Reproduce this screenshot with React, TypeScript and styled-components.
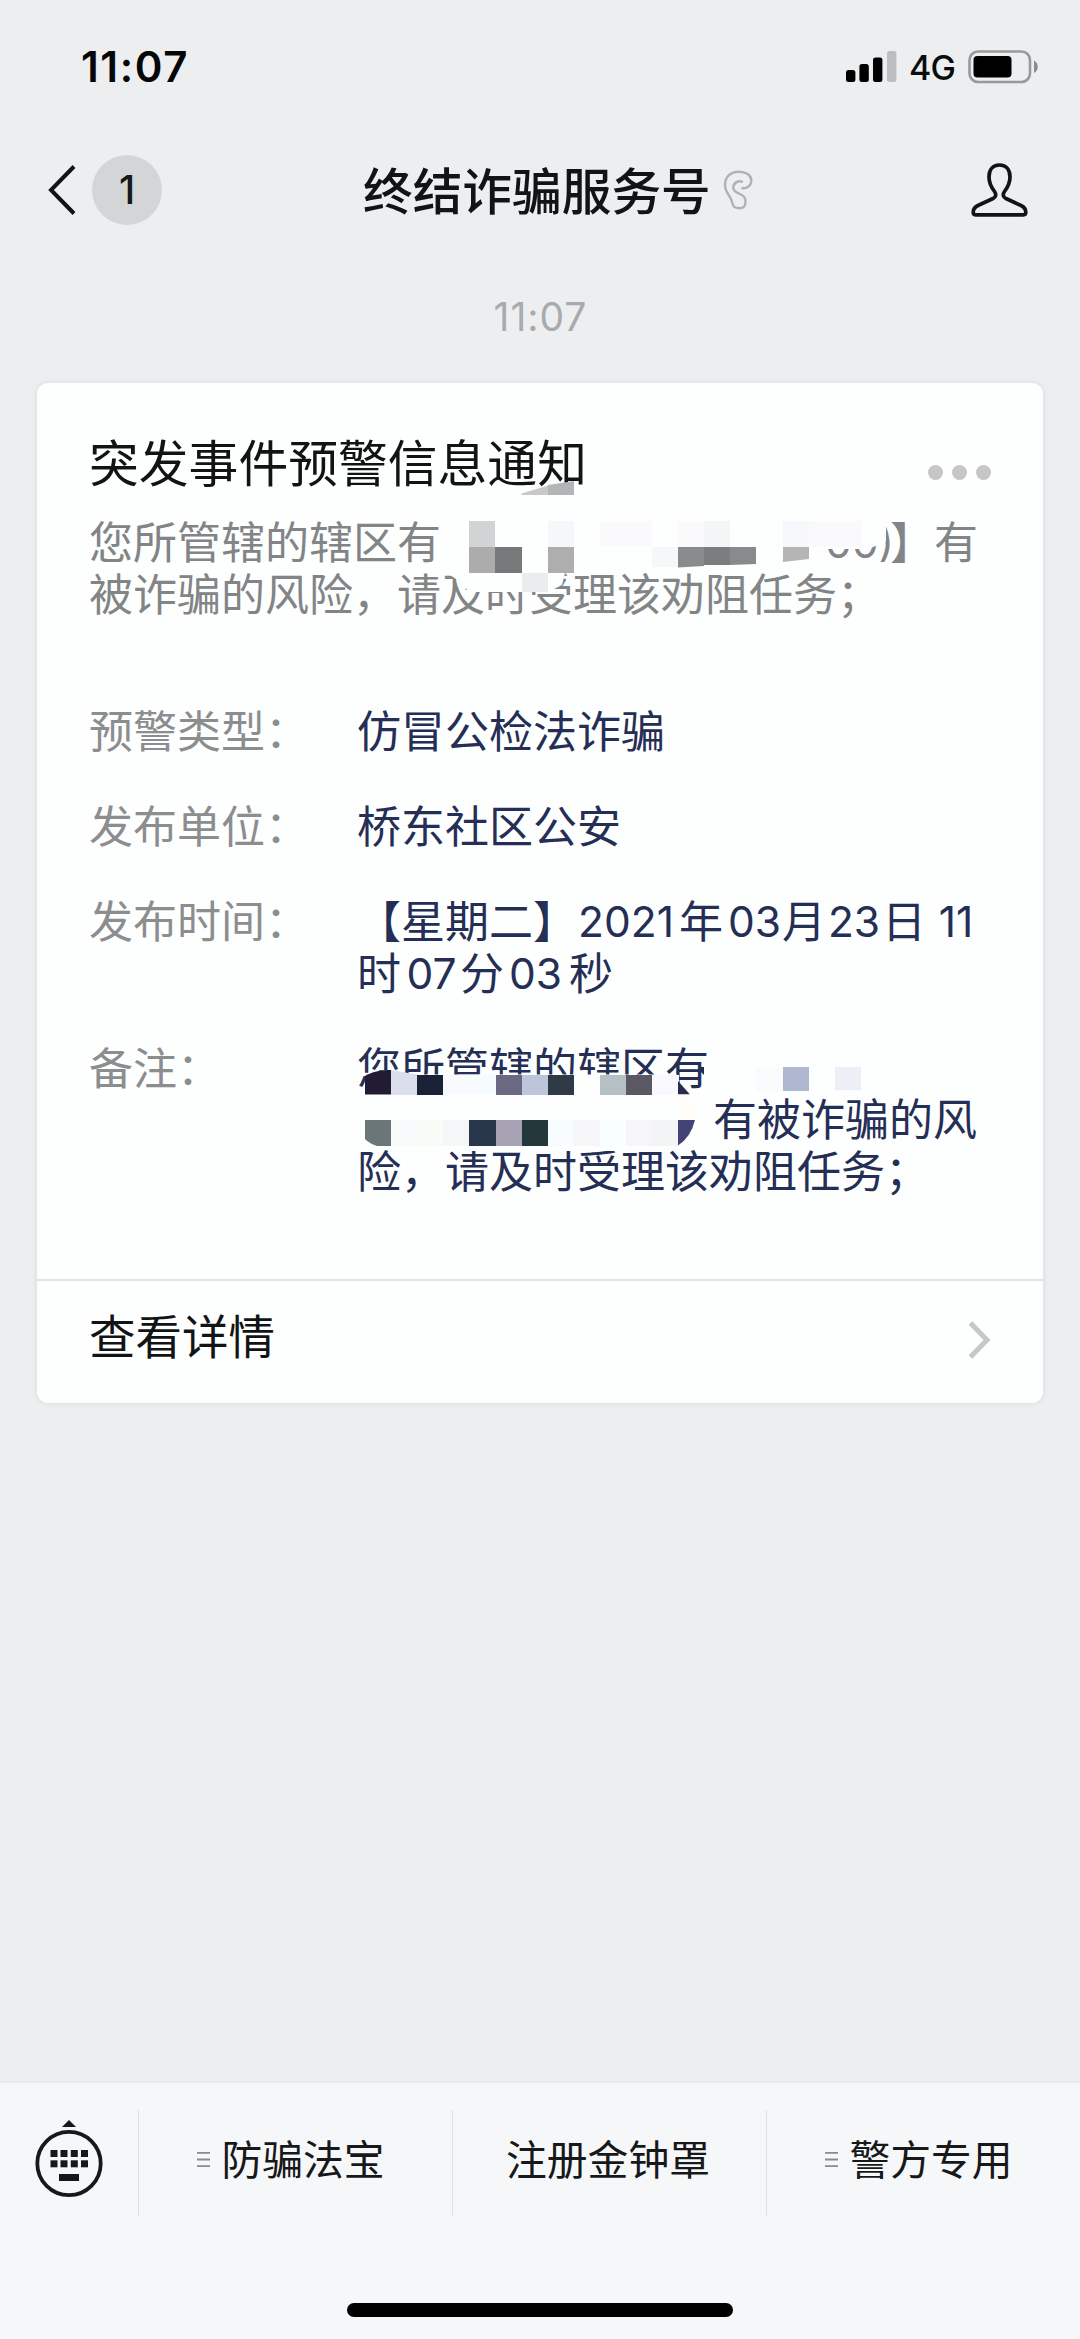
import React from "react";
import styled, { createGlobalStyle } from "styled-components";

const cjk = `"Noto Sans CJK SC", "Noto Sans", sans-serif`;
const latin = `Inter, "Noto Sans CJK SC", sans-serif`;

const Global = createGlobalStyle`
  * { box-sizing: border-box; }
  body { margin: 0; background: #edeef0; font-family: ${cjk}; }
`;

const Screen = styled.div`
  width: 1080px;
  height: 2339px;
  display: flex;
  flex-direction: column;
  background: #edeef0;
  overflow: hidden;
`;

const StatusBar = styled.header`
  height: 132px;
  padding: 1px 41px 0 81px;
  display: flex;
  align-items: center;
  justify-content: space-between;
`;

const Clock = styled.div`
  font: 600 42px/60px ${latin};
  letter-spacing: 1.6px;
  color: #050607;
`;

const StatusIcons = styled.div`
  display: flex;
  align-items: center;
`;

const Network = styled.span`
  width: 48px;
  margin: 3px 11px 0 12px;
  font: 500 34px/50px ${latin};
  letter-spacing: -0.8px;
  color: #0a0b0c;
`;

const NavBar = styled.nav`
  height: 115px;
  padding: 0 52px 0 48px;
  display: flex;
  align-items: center;
`;

const Badge = styled.span`
  width: 70px;
  height: 70px;
  margin-left: 16px;
  border-radius: 50%;
  background: #d4d5d6;
  display: flex;
  align-items: center;
  justify-content: center;
  font: 500 39px/70px ${latin};
  color: #17181a;
`;

const Title = styled.h1`
  margin: -4px 12px 0 201px;
  font: 500 49.7px/72px ${cjk};
  color: #121315;
  white-space: nowrap;
`;

const Push = styled.div`
  flex: 1;
`;

const Chat = styled.main`
  flex: 1;
  padding: 40px 37px 0;
`;

const TimeStamp = styled.div`
  height: 60px;
  margin-bottom: 36px;
  padding-left: 1px;
  text-align: center;
  font: 400 39px/60px ${latin};
  letter-spacing: 1px;
  color: #a9aaac;
`;

const Card = styled.article`
  width: 1006px;
  height: 1020px;
  border-radius: 11px;
  background: #fdfefe;
  box-shadow: 0 0 5px #d6d7da;
  display: flex;
  flex-direction: column;
`;

const CardBody = styled.section`
  flex: 1;
  padding: 39px 51px 0 52px;
`;

const CardHead = styled.div`
  height: 76px;
  display: flex;
  justify-content: space-between;
  align-items: center;
`;

const CardTitle = styled.h2`
  margin: 0;
  font: 400 49.8px/76px ${cjk};
  color: #121315;
`;

const Dots = styled.div`
  display: flex;
  gap: 9px;
  margin: 24px 1px 0 0;
`;

const Dot = styled.i`
  width: 15px;
  height: 15px;
  border-radius: 50%;
  background: #c6c6c8;
`;

const Block = styled.div<{ $tone: string }>`
  position: relative;
  font: 400 44px/51.5px ${cjk};
  color: ${(p) => p.$tone};
  white-space: nowrap;
`;

const Summary = styled(Block)`
  margin: 17px 0 86px;
`;

const Line = styled.div<{ $indent?: number }>`
  display: flex;
  height: 51.5px;
  padding-left: ${(p) => p.$indent ?? 0}px;
`;

const Gap = styled.span<{ $w: number }>`
  width: ${(p) => p.$w}px;
`;

const Num = styled.span<{ $w: number; $nudge?: number }>`
  width: ${(p) => p.$w}px;
  padding: 2px 0 0 ${(p) => Math.max(p.$nudge ?? 0, 0)}px;
  padding-right: ${(p) => Math.max(-(p.$nudge ?? 0), 0)}px;
  text-align: center;
  font-family: ${latin};
  font-size: 42.5px;
`;

const Overlay = styled.svg`
  position: absolute;
  left: 0;
  top: 0;
  overflow: visible;
  pointer-events: none;
`;

const Fields = styled.dl`
  margin: 0;
  display: grid;
  grid-template-columns: 268px 1fr;
  row-gap: 43.5px;
`;

const Label = styled.dt`
  font: 400 44px/51.5px ${cjk};
  color: #8c8d8f;
`;

const Value = styled.dd`
  margin: 0;
`;

const CardFooter = styled.footer`
  height: 124px;
  padding: 0 52px;
  border-top: 2px solid #e2e3e5;
  display: flex;
  align-items: center;
  justify-content: space-between;
  font: 400 46.5px/68px ${cjk};
  color: #121315;
`;

const FooterText = styled.span`
  margin-top: -16px;
`;

const FooterArrow = styled.svg`
  margin-top: -5px;
`;

const BottomBar = styled.footer`
  height: 258px;
  border-top: 2px solid #e8e9eb;
  background: #f6f7f9;
  display: flex;
  flex-direction: column;
  align-items: center;
`;

const Menu = styled.div`
  width: 100%;
  height: 106px;
  margin: 27px 0 87px;
  display: grid;
  grid-template-columns: 138px repeat(3, 314px);
`;

const KeyboardCell = styled.div`
  display: flex;
  justify-content: center;
  padding-top: 9px;
`;

const MenuItem = styled.div<{ $shift?: number }>`
  border-left: 1px solid #e0e1e4;
  padding: 0 ${(p) => p.$shift ?? 0}px 7px 0;
  display: flex;
  align-items: center;
  justify-content: center;
  gap: 11px;
  font: 400 40.8px/60px ${cjk};
  color: #17181a;
`;

const MenuText = styled.span`
  margin-top: -4px;
`;

const HomeIndicator = styled.div`
  width: 386px;
  height: 14px;
  border-radius: 7px;
  background: #000;
`;

const Signal = () => (
  <svg width="51" height="32" viewBox="0 0 51 32">
    <rect x="0" y="19" width="9.4" height="12" rx="2.5" fill="#000" />
    <rect x="13.4" y="13" width="9.4" height="18" rx="2.5" fill="#000" />
    <rect x="27" y="6.5" width="9.4" height="24.5" rx="2.5" fill="#000" />
    <rect x="41" y="0" width="9.4" height="31" rx="2.5" fill="#bcbdbe" />
  </svg>
);

const Battery = () => (
  <svg width="71" height="34" viewBox="0 0 71 34">
    <rect x="1.5" y="1.5" width="60.5" height="30.5" rx="8.5" fill="none" stroke="#98999b" strokeWidth="2.6" />
    <rect x="5.5" y="6" width="38" height="21.5" rx="4" fill="#000" />
    <path d="M66 10.5c5 2.5 5 10 0 12.500z" fill="#8a8b8d" />
  </svg>
);

const Back = () => (
  <svg width="28" height="50" viewBox="0 0 28 50">
    <path d="M26 1.500 3 25 26 48.500" fill="none" stroke="#121315" strokeWidth="4" />
  </svg>
);

const Ear = () => (
  <svg width="30" height="40" viewBox="-1 -0.500 30 40">
    <path
      d="M18 11.200C14 9.800 9.300 12.500 9.300 17 9.300 21 12.500 22 16 23.500 20.500 25.500 21.800 28 21.500 31.500 21.300 35 20.500 37.800 15.500 37.800 10.500 37.800 9 36 8.300 32.500 7.500 25.500 1 23 1 14.500 1 6 7 1.200 14.500 1.200 22 1.200 27.300 4.500 27.300 10 27.300 15 23.500 17.800 18.500 17.800"
      fill="none"
      stroke="#b0b1b3"
      strokeWidth="2.400"
      strokeLinecap="round"
    />
  </svg>
);

const Person = () => (
  <svg width="57" height="55" viewBox="0 -1 57 55">
    <path
      d="M28.500 2C21.500 2 18 7 18 14 18 20.500 20.500 24.500 23.500 28.500 25.500 31.500 25 34 22 35.500L7 42.500C3 44.500 2.200 46.500 2.200 49 2.200 51 3 51.800 4.500 51.800H52.500C54 51.800 54.800 51 54.800 49 54.800 46.500 54 44.500 50 42.500L35 35.500C32 34 31.500 31.500 33.500 28.500 36.500 24.500 39 20.500 39 14 39 7 35.500 2 28.500 2Z"
      fill="none"
      stroke="#121315"
      strokeWidth="3.700"
    />
  </svg>
);

const Keyboard = () => (
  <svg width="70" height="80" viewBox="0 0 70 80">
    <path d="M28 8 35 1 42 8Z" fill="#17181a" />
    <circle cx="35" cy="44.500" r="31.700" fill="none" stroke="#17181a" strokeWidth="3.800" />
    {[31, 41.300].map((y) =>
      [16.500, 26.500, 36.800, 47].map((x) => (
        <rect key={`${x}-${y}`} x={x} y={y} width="7" height="7" fill="#17181a" />
      )),
    )}
    <rect x="25" y="55" width="20" height="7" fill="#17181a" />
  </svg>
);

const Burger = () => (
  <svg width="13" height="17" viewBox="0 0 13 17">
    <path d="M0 1.800H13M0 8.500H13M0 15.200H13" stroke="#8a8b8d" strokeWidth="1.800" />
  </svg>
);

type Tile = [number, number, number, number, string];

const Tiles = ({ items }: { items: Tile[] }) => (
  <>
    {items.map(([x, y, w, h, fill], i) => (
      <rect key={i} x={x} y={y} width={w} height={h} fill={fill} shapeRendering="crispEdges" />
    ))}
  </>
);

const summaryTiles: Tile[] = [
  [380, 6, 26, 26, "#d2d3d4"],
  [380, 32, 26, 26, "#acacad"],
  [406, 32, 27, 26, "#777879"],
  [459, 6, 26, 26, "#f6f7fa"],
  [459, 32, 26, 26, "#aeaeaf"],
  [433, 58, 26, 19, "#ebecee"],
  [511, 6, 52, 26, "#fafafc"],
  [563, 32, 26, 20, "#f6f7f8"],
  [589, 6, 26, 26, "#fafafc"],
  [615, 6, 26, 26, "#f4f5f7"],
  [694, 6, 26, 26, "#f7f8fb"],
  [720, 6, 52, 26, "#fafafd"],
];

const SummaryMosaic = () => (
  <Overlay width="900" height="103" viewBox="0 0 900 103">
    <path d="M358 58H476L473 70 459 77H380L370 66Z" fill="#fdfefe" />
    <path d="M735 4H797V26L780 34H735Z" fill="#fdfefe" />
    <Tiles items={summaryTiles} />
    <path d="M432.500 -21.500 459 -29.500V-20H432.500Z" fill="#c9c9ca" />
    <path d="M459 -30 485 -34V-20H459Z" fill="#b3b4b5" />
    <path d="M589 32H615V51L589 52.500Z" fill="#8a8b8c" />
    <path d="M615 32H641V50H615Z" fill="#7c7d7e" />
    <path d="M641 32H667V49L641 50Z" fill="#898a8b" />
    <path d="M694 32H720V44L694 47Z" fill="#b5b5b5" />
  </Overlay>
);

const topRow = ["", "#dadeed", "#1a2238", "#f8fbfd", "#f6fbfe", "#6a6882", "#bcc5da", "#2e3a45", "#fdfefe", "#b4c0c4", "#5a5963", "#f9f8fc"];
const bottomRow = ["", "#f8fafb", "#f9fbf6", "#f4f6f8", "#29374a", "#a7a2b4", "#24383c", "#f7fcfe", "#f6f6f9", "#f9fefe", "#f6f5fa", "#f2f4f6"];

const remarkTiles: Tile[] = [
  ...topRow.flatMap((c, i): Tile[] => (c ? [[8 + Math.round(i * 26.100), 33.500, 26.500, 20, c]] : [])),
  ...bottomRow.flatMap((c, i): Tile[] => (c ? [[8 + Math.round(i * 26.100), 79, 26.500, 26, c]] : [])),
  [399, 26, 27, 24, "#f9fbfd"],
  [426, 26, 26, 24, "#b0b8cf"],
  [478, 26, 26, 23, "#eceff5"],
];

const RemarkMosaic = () => (
  <Overlay width="620" height="155" viewBox="0 0 620 155">
    <path d="M8 35 20 30 34 29V33.500H320V53.500H336L338 79 8 79Z" fill="#fdfefe" />
    <path d="M92 104H258V110H92Z" fill="#fdfefe" />
    <Tiles items={remarkTiles} />
    <path d="M8 35C14 31 24 29 34 29V53.500H8Z" fill="#211c33" />
    <path d="M34 29 60 33.500V36H34Z" fill="#dadeed" />
    <path d="M321 40 333 53.500H321Z" fill="#2a2a4b" />
    <path d="M321 53.500H334Q338 64 338 79H321Z" fill="#fefdf8" />
    <path d="M8 79H34V105H20Q13 103 8 98Z" fill="#6b7679" />
    <path d="M321 79H338Q334 96 321 104.500Z" fill="#444375" />
    <path d="M343 26H347V34L344 31Z" fill="#232b52" />
  </Overlay>
);

const NAVY = "#252e55";

export default function App() {
  return (
    <Screen>
      <Global />
      <StatusBar>
        <Clock>11:07</Clock>
        <StatusIcons>
          <Signal />
          <Network>4G</Network>
          <Battery />
        </StatusIcons>
      </StatusBar>
      <NavBar>
        <Back />
        <Badge>1</Badge>
        <Title>终结诈骗服务号</Title>
        <Ear />
        <Push />
        <Person />
      </NavBar>
      <Chat>
        <TimeStamp>11:07</TimeStamp>
        <Card>
          <CardBody>
            <CardHead>
              <CardTitle>突发事件预警信息通知</CardTitle>
              <Dots>
                <Dot />
                <Dot />
                <Dot />
              </Dots>
            </CardHead>
            <Summary $tone="#838486">
              <Line>
                <span>您所管辖的辖区有</span>
                <Gap $w={384} />
                <Num $w={65}>00)</Num>
                <span>】</span>
                <span>有</span>
              </Line>
              <Line>被诈骗的风险，请及时受理该劝阻任务；</Line>
              <SummaryMosaic />
            </Summary>
            <Fields>
              <Label>预警类型：</Label>
              <Value>
                <Block $tone={NAVY}>仿冒公检法诈骗</Block>
              </Value>
              <Label>发布单位：</Label>
              <Value>
                <Block $tone={NAVY}>桥东社区公安</Block>
              </Value>
              <Label>发布时间：</Label>
              <Value>
                <Block $tone={NAVY}>
                  <Line>
                    <span>【星期二】</span>
                    <Num $w={102} $nudge={-4}>2021</Num>
                    <span>年</span>
                    <Num $w={59} $nudge={4}>03</Num>
                    <span>月</span>
                    <Num $w={56}>23</Num>
                    <span>日</span>
                    <Num $w={60}>11</Num>
                  </Line>
                  <Line>
                    <span>时</span>
                    <Num $w={59} $nudge={2}>07</Num>
                    <span>分</span>
                    <Num $w={65} $nudge={-2}>03</Num>
                    <span>秒</span>
                  </Line>
                </Block>
              </Value>
              <Label>备注：</Label>
              <Value>
                <Block $tone={NAVY}>
                  <Line>您所管辖的辖区有</Line>
                  <Line $indent={356}>有被诈骗的风</Line>
                  <Line>险，请及时受理该劝阻任务；</Line>
                  <RemarkMosaic />
                </Block>
              </Value>
            </Fields>
          </CardBody>
          <CardFooter>
            <FooterText>查看详情</FooterText>
            <FooterArrow width="23" height="38" viewBox="0 0 23 38">
              <path d="M2.500 2 19 19 2.500 36" fill="none" stroke="#c6c7c9" strokeWidth="5" />
            </FooterArrow>
          </CardFooter>
        </Card>
      </Chat>
      <BottomBar>
        <Menu>
          <KeyboardCell>
            <Keyboard />
          </KeyboardCell>
          <MenuItem $shift={9}>
            <Burger />
            <MenuText>防骗法宝</MenuText>
          </MenuItem>
          <MenuItem $shift={3}>
            <MenuText>注册金钟罩</MenuText>
          </MenuItem>
          <MenuItem $shift={9}>
            <Burger />
            <MenuText>警方专用</MenuText>
          </MenuItem>
        </Menu>
        <HomeIndicator />
      </BottomBar>
    </Screen>
  );
}
